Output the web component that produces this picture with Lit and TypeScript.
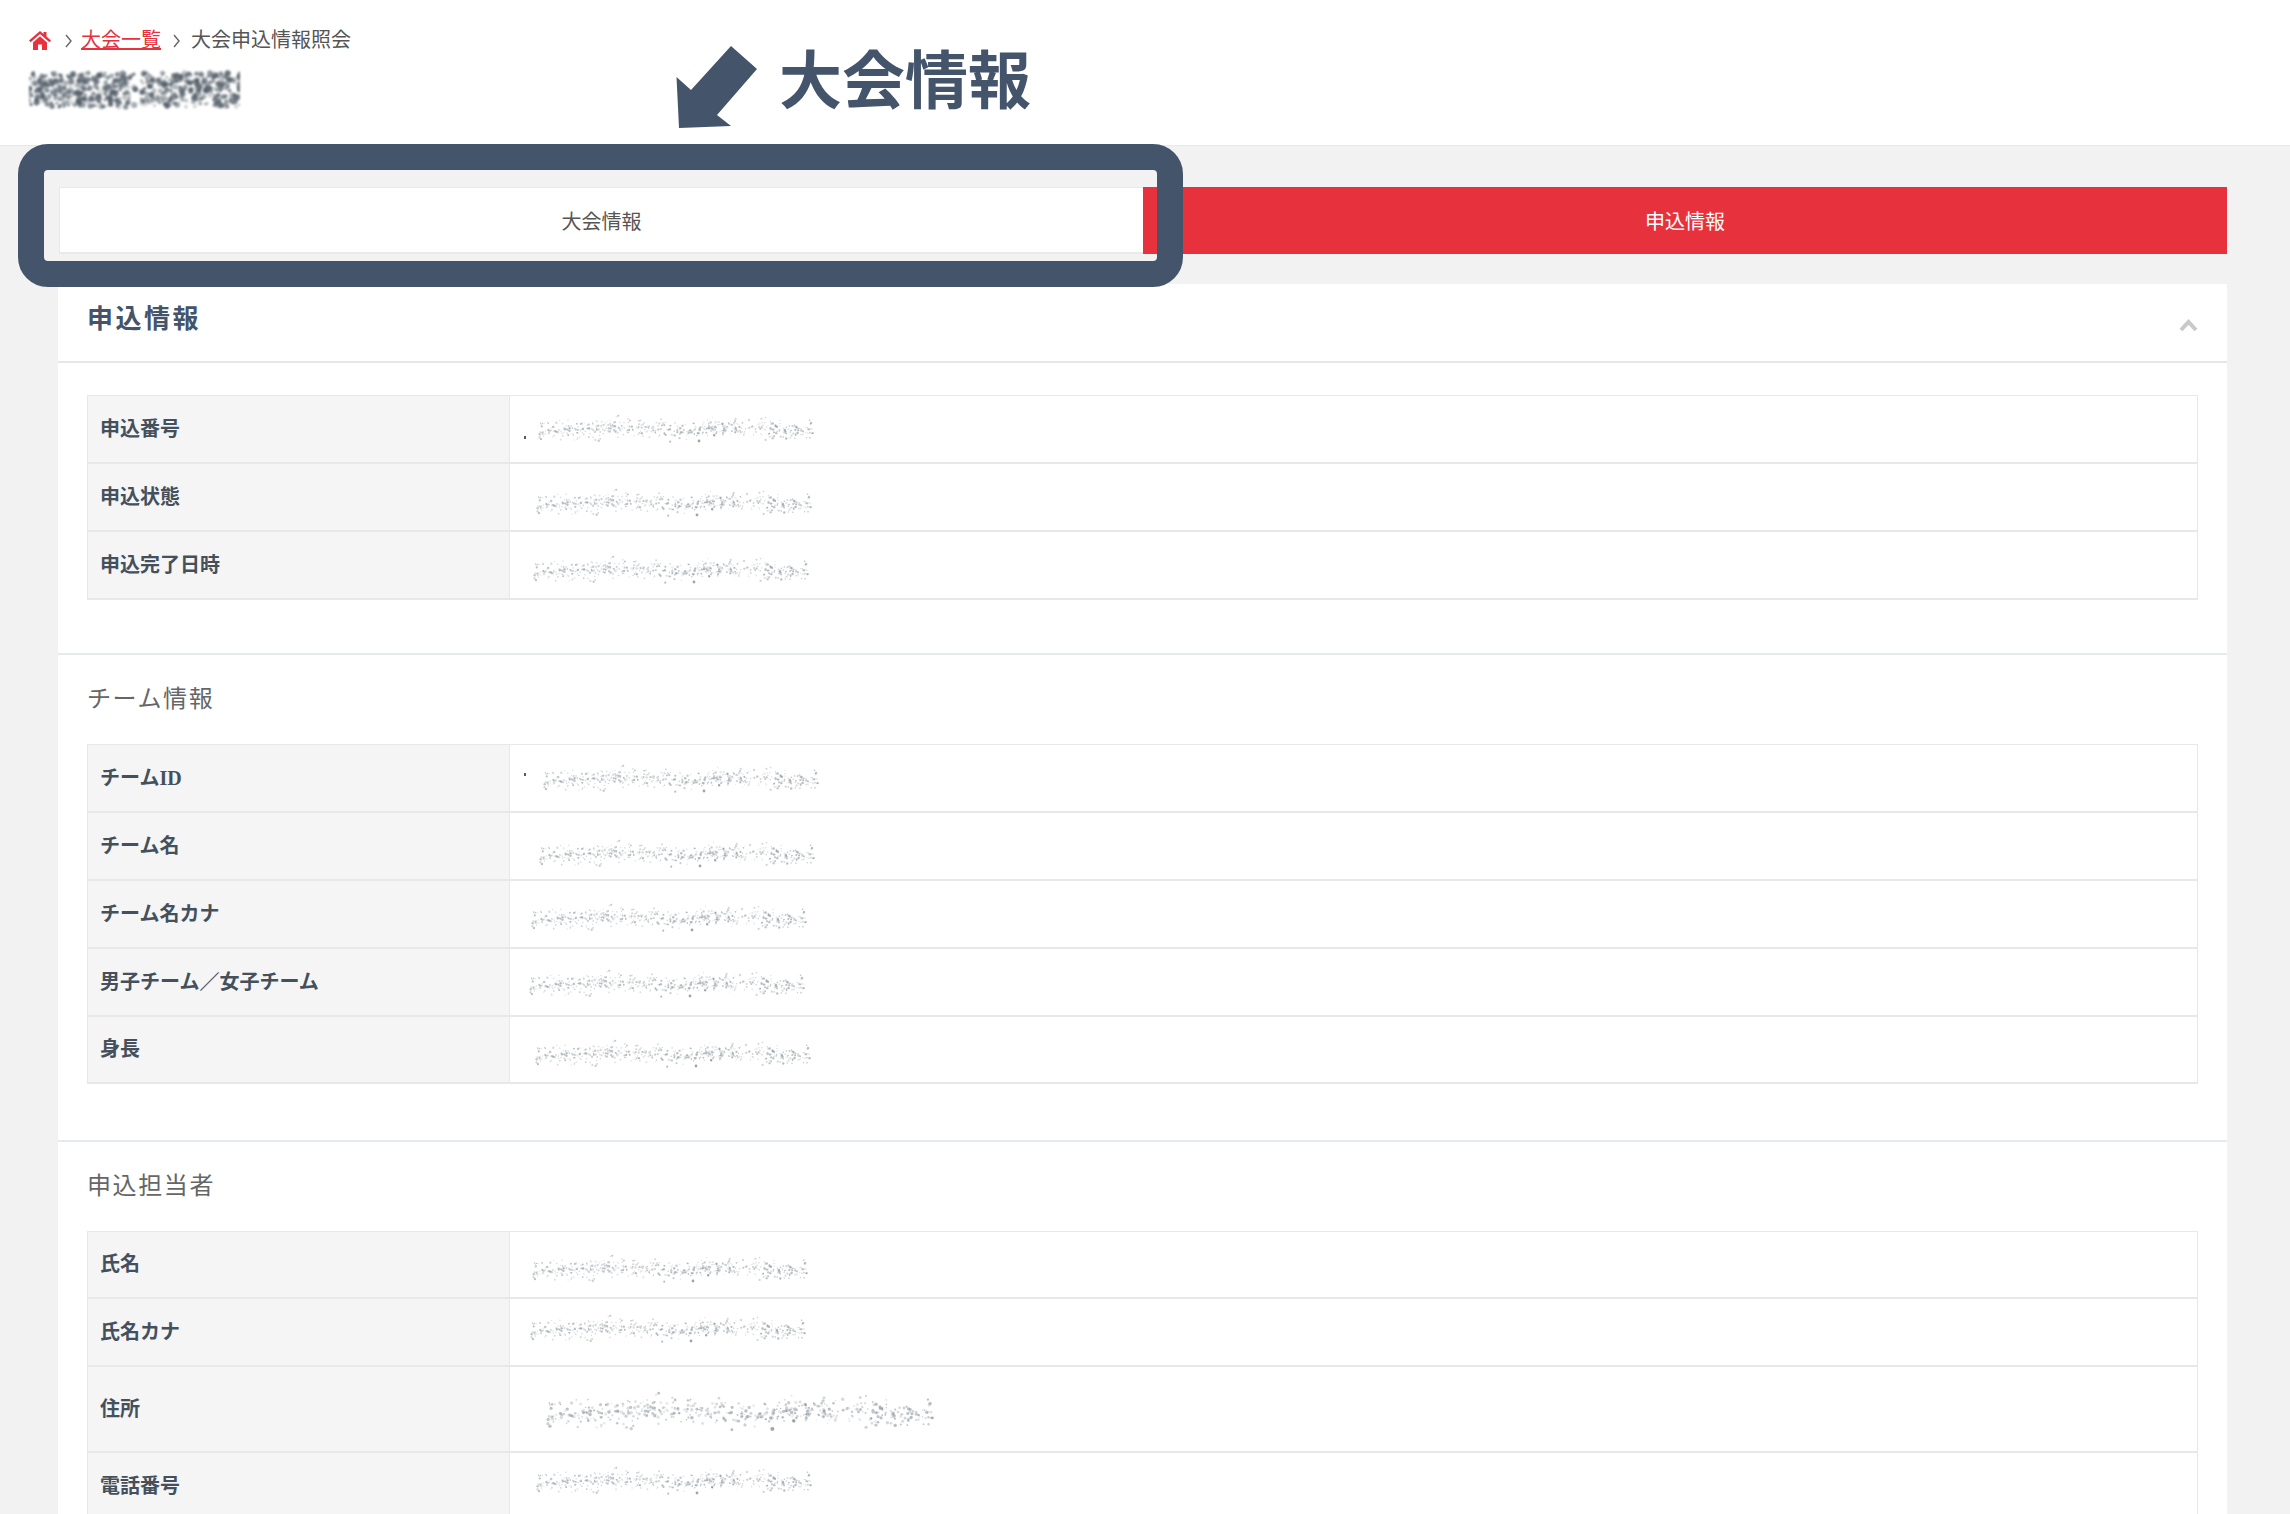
import { LitElement, html, css, svg } from "lit";
import { customElement } from "lit/decorators.js";

type Dot = { x: number; y: number; r: number; o: number };

function rng(seed: number) {
  let s = seed;
  return () => {
    s = (s * 1664525 + 1013904223) % 4294967296;
    return s / 4294967296;
  };
}

function makeBand(): Dot[] {
  const r = rng(77);
  const out: Dot[] = [];
  for (let i = 0; i < 520; i++) {
    const x = 3 + r() * 274;
    const gauss = (r() + r() + r() + r()) / 4 - 0.5;
    const y = 16 + gauss * 30 + Math.sin(x / 18) * 1.5;
    out.push({ x, y, r: 0.5 + r() * 0.75, o: 0.15 + r() * 0.4 });
  }
  out.push({ x: 163, y: 28, r: 1.4, o: 0.75 });
  return out;
}

function makeMosaic(): Dot[] {
  const r = rng(1234);
  const out: Dot[] = [];
  for (let i = 0; i < 620; i++) {
    const x = r() * 211;
    if (x > 100 && x < 112 && r() > 0.25) continue;
    const y = 4 + r() * 34;
    out.push({ x, y, r: 1.2 + r() * 1.9, o: 0.2 + r() * 0.7 });
  }
  return out;
}

const BAND = makeBand();
const MOSAIC = makeMosaic();

type Row = {
  label: string;
  h: number;
  sx: number;
  sy: number;
  sw?: number;
  sh?: number;
  patch?: [number, number];
  tick?: [number, number];
};

const info: Row[] = [
  { label: "申込番号", h: 68, sx: 536, sy: 413, tick: [524, 436] },
  { label: "申込状態", h: 68, sx: 534, sy: 487 },
  { label: "申込完了日時", h: 68, sx: 531, sy: 554 },
];
const team: Row[] = [
  { label: "チームID", h: 68, sx: 541, sy: 763, tick: [524, 773] },
  { label: "チーム名", h: 68, sx: 537, sy: 838 },
  { label: "チーム名カナ", h: 68, sx: 529, sy: 902 },
  { label: "男子チーム／女子チーム", h: 68, sx: 527, sy: 968 },
  { label: "身長", h: 67, sx: 533, sy: 1038 },
];
const contact: Row[] = [
  { label: "氏名", h: 67, sx: 530, sy: 1253 },
  { label: "氏名カナ", h: 68, sx: 528, sy: 1313, patch: [513, 822] },
  { label: "住所", h: 86, sx: 543, sy: 1389, sw: 394, sh: 46 },
  { label: "電話番号", h: 68, sx: 534, sy: 1465, patch: [520, 828] },
];

@customElement("app-root")
export class AppRoot extends LitElement {
  static styles = css`
    :host {
      display: block;
      position: relative;
      width: 2290px;
      height: 1514px;
      overflow: hidden;
      background: #f2f2f2;
      font-family: "Liberation Sans", "Noto Sans CJK JP", sans-serif;
      color: #555;
    }
    header {
      height: 146px;
      box-sizing: border-box;
      background: #fff;
      border-bottom: 1px solid #e8e8ec;
      padding: 28px 0 0 29px;
    }
    .crumbs {
      display: flex;
      align-items: center;
      height: 24px;
      font-size: 20px;
      line-height: 24px;
      color: #555;
    }
    .home { width: 22px; height: 19px; display: block; }
    .sep { width: 7px; height: 14px; margin: 2px 9px 0 14px; display: block; }
    .sep.b { margin: 2px 11px 0 12px; }
    .crumbs a { color: #e7323e; text-decoration: underline; }
    .name { display: block; margin-top: 17px; }
    main { padding: 41px 63px 0 58px; }
    .tabs { display: flex; height: 67px; padding-left: 1px; }
    .tab {
      display: flex;
      align-items: center;
      justify-content: center;
      font-size: 20px;
      box-sizing: border-box;
    }
    .tab.l { width: 1084px; background: #fff; border: 1px solid #e9e9e9; border-right: 0; border-bottom-width: 2px; }
    .tab.r { flex: 1; background: #e7323e; color: #fff; }
    .card { background: #fff; margin-top: 30px; height: 1300px; }
    .card-head {
      height: 79px;
      box-sizing: border-box;
      border-bottom: 2px solid #e6e6ea;
      display: flex;
      align-items: center;
      justify-content: space-between;
      padding: 0 29px;
    }
    .card-head h2 {
      margin: 0 0 7px;
      font-size: 26px;
      line-height: 36px;
      letter-spacing: 2.5px;
      font-weight: 700;
      color: #44546a;
    }
    .chev { width: 19px; height: 14px; display: block; margin-top: 4px; }
    .section { padding: 0 29px; border-bottom: 2px solid #e6e9ee; box-sizing: border-box; }
    .section.first { padding-top: 32px; height: 292px; }
    .section.team { height: 487px; }
    .section.last { border-bottom: 0; }
    .section h3 {
      margin: 0;
      height: 89px;
      box-sizing: border-box;
      padding-top: 27px;
      font-size: 24px;
      line-height: 34px;
      letter-spacing: 1.6px;
      font-weight: 400;
      color: #666;
    }
    .table { border: 1px solid #e8e8e8; border-bottom: 0; }
    .row {
      display: grid;
      grid-template-columns: 422px 1fr;
      box-sizing: border-box;
      border-bottom: 2px solid #e8e8e8;
    }
    .th {
      display: flex;
      align-items: center;
      padding: 0 0 4px 12px;
      background: #f5f5f5;
      border-right: 1px solid #e8e8e8;
      font-family: "Liberation Serif", "Noto Sans CJK JP", serif;
      font-size: 20px;
      font-weight: 700;
      color: #44505c;
    }
    .td { background: #fff; }
    .speck { position: absolute; display: block; filter: blur(0.4px); }
    .patch { position: absolute; height: 3px; background: #fff; }
    .tick { position: absolute; width: 2px; height: 3px; background: #5a5a5a; }
    .frame {
      position: absolute;
      left: 18px;
      top: 144px;
      width: 1165px;
      height: 143px;
      box-sizing: border-box;
      border: 26px solid #44546a;
      border-radius: 30px;
    }
    .arrow { position: absolute; left: 676px; top: 46px; width: 81px; height: 82px; display: block; }
    .note {
      position: absolute;
      left: 779px;
      top: 36px;
      font-size: 63px;
      line-height: 90px;
      font-weight: 700;
      color: #44546a;
    }
  `;

  private dots(list: Dot[], fill: string) {
    return list.map(
      (d) => svg`<circle cx=${d.x} cy=${d.y} r=${d.r} fill=${fill} fill-opacity=${d.o}></circle>`
    );
  }

  private overlay(r: Row) {
    const w = r.sw ?? 280;
    const h = r.sh ?? 32;
    return html`
      ${r.patch
        ? html`<div class="patch" style="left:${r.patch[0]}px;width:${r.patch[1] - r.patch[0]}px;top:${r.sy - (r.sy === 1313 ? 14 : 12)}px"></div>`
        : ""}
      ${r.tick ? html`<div class="tick" style="left:${r.tick[0]}px;top:${r.tick[1]}px"></div>` : ""}
      <svg class="speck" style="left:${r.sx}px;top:${r.sy}px" width=${w} height=${h} viewBox="0 0 280 32">
        ${this.dots(BAND, "#7d8790")}
      </svg>
    `;
  }

  private table(rows: Row[]) {
    return html`<div class="table">
      ${rows.map(
        (r) => html`<div class="row" style="height:${r.h}px">
          <div class="th">${r.label}</div>
          <div class="td"></div>
        </div>`
      )}
    </div>`;
  }

  render() {
    return html`
      <header>
        <nav class="crumbs">
          <svg class="home" viewBox="0 0 22 19">
            <path fill="#e7323e" d="M11 0 L14.5 3 V1 H17.5 V5.6 L22 9.6 L20.4 11.2 L11 3 L1.6 11.2 L0 9.6 Z M4 11.4 L11 5.2 L18 11.4 V19 H13 V13.5 H9 V19 H4 Z"></path>
          </svg>
          <svg class="sep" viewBox="0 0 7 14"><path d="M1 1 L6 7 L1 13" fill="none" stroke="#666" stroke-width="1.4"></path></svg>
          <a href="#">大会一覧</a>
          <svg class="sep b" viewBox="0 0 7 14"><path d="M1 1 L6 7 L1 13" fill="none" stroke="#666" stroke-width="1.4"></path></svg>
          <span>大会申込情報照会</span>
        </nav>
        <svg class="name" width="211" height="43" viewBox="0 0 211 43" style="filter:blur(0.9px)">
          ${this.dots(MOSAIC, "#56616b")}
        </svg>
      </header>
      <main>
        <div class="tabs">
          <div class="tab l">大会情報</div>
          <div class="tab r">申込情報</div>
        </div>
        <div class="card">
          <div class="card-head">
            <h2>申込情報</h2>
            <svg class="chev" viewBox="0 0 19 14"><path d="M2 12 L9.5 4 L17 12" fill="none" stroke="#c9c9c9" stroke-width="4"></path></svg>
          </div>
          <div class="section first">${this.table(info)}</div>
          <div class="section team"><h3>チーム情報</h3>${this.table(team)}</div>
          <div class="section last"><h3>申込担当者</h3>${this.table(contact)}</div>
        </div>
      </main>
      ${[...info, ...team, ...contact].map((r) => this.overlay(r))}
      <div class="frame"></div>
      <svg class="arrow" viewBox="676 46 81 82">
        <polygon fill="#44546a" points="679,128 676.5,77 691,90 731,46 757,69 717,115 731,126"></polygon>
      </svg>
      <div class="note">大会情報</div>
    `;
  }
}
